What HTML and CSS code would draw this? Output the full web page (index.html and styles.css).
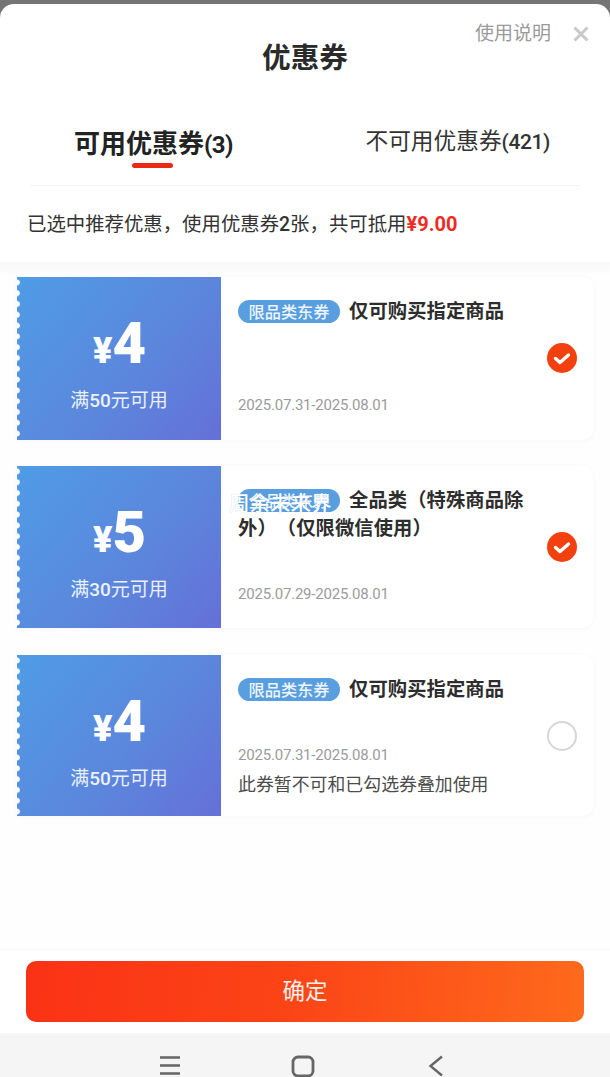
FILE: index.html
```html
<!DOCTYPE html>
<html lang="zh">
<head>
<meta charset="utf-8">
<title>优惠券</title>
<link rel="stylesheet" href="styles.css">
</head>
<body>
<div class="page">
  <div class="sheet">
    <header class="head">
      <span></span>
      <h1 class="title">优惠券</h1>
      <div class="head-tools">
        <span class="help">使用说明</span>
        <svg class="close" width="16" height="16" viewBox="0 0 16 16"><path d="M1.500 1.500l13 13M14.500 1.500l-13 13" stroke="#c9c9c9" stroke-width="3" fill="none"/></svg>
      </div>
    </header>
    <nav class="tabs">
      <div class="tab tab-on">可用优惠券<span class="num">(3)</span></div>
      <div class="tab tab-off">不可用优惠券<span class="num">(421)</span></div>
    </nav>
    <p class="summary">已选中推荐优惠，使用优惠券<span class="n">2</span>张，共可抵用<span class="sum">¥9.00</span></p>
    <section class="list">
      <article class="card">
        <div class="stub"><div class="amount"><span class="yen">¥</span><span class="val">4</span></div><div class="cond">满<span class="n">50</span>元可用</div></div>
        <div class="info">
          <div class="desc"><span class="tag">限品类东券</span>仅可购买指定商品</div>
          <div class="date">2025.07.31-2025.08.01</div>
        </div>
        <svg class="mark" width="32" height="32" viewBox="0 0 32 32"><circle cx="16" cy="16" r="15" fill="#f2410f"/><path d="M9.500 16.500l4.500 4 8.500-7.500" stroke="#fff" stroke-width="3.400" fill="none" stroke-linecap="round" stroke-linejoin="round"/></svg>
      </article>
      <article class="card">
        <div class="stub"><div class="amount"><span class="yen">¥</span><span class="val">5</span></div><div class="cond">满<span class="n">30</span>元可用</div></div>
        <div class="info">
          <div class="desc"><span class="tag">全品类东券<span class="wm">周余未来界</span></span>全品类（特殊商品除外）（仅限微信使用）</div>
          <div class="date">2025.07.29-2025.08.01</div>
        </div>
        <svg class="mark" width="32" height="32" viewBox="0 0 32 32"><circle cx="16" cy="16" r="15" fill="#f2410f"/><path d="M9.500 16.500l4.500 4 8.500-7.500" stroke="#fff" stroke-width="3.400" fill="none" stroke-linecap="round" stroke-linejoin="round"/></svg>
      </article>
      <article class="card card-last">
        <div class="stub"><div class="amount"><span class="yen">¥</span><span class="val">4</span></div><div class="cond">满<span class="n">50</span>元可用</div></div>
        <div class="info">
          <div class="desc"><span class="tag">限品类东券</span>仅可购买指定商品</div>
          <div class="date">2025.07.31-2025.08.01</div>
          <div class="note">此券暂不可和已勾选券叠加使用</div>
        </div>
        <svg class="mark" width="32" height="32" viewBox="0 0 32 32"><circle cx="16" cy="16" r="14" fill="#fff" stroke="#d6d6d6" stroke-width="2"/></svg>
      </article>
    </section>
    <footer class="foot"><button class="ok">确定</button></footer>
  </div>
  <div class="navbar">
    <svg width="22" height="20" viewBox="0 0 22 20"><path d="M1 2.500h20M1 10.500h20M1 18.500h20" stroke="#666" stroke-width="2.600" fill="none"/></svg>
    <svg width="24" height="22" viewBox="0 0 24 22"><rect x="2" y="2" width="20" height="19" rx="5" stroke="#666" stroke-width="2.800" fill="none"/></svg>
    <svg width="16" height="22" viewBox="0 0 16 22"><path d="M14 1.500L2.500 11 14 20.500" stroke="#666" stroke-width="2.400" fill="none"/></svg>
  </div>
</div>
</body>
</html>
```
FILE: styles.css
```css
* { box-sizing: border-box; }
html, body { margin: 0; padding: 0; }
body {
  font-family: "Noto Sans CJK SC", "Noto Sans", sans-serif;
  color: #2b2b2b;
  text-spacing-trim: space-all;
}
.page {
  width: 610px;
  height: 1077px;
  overflow: hidden;
  display: flex;
  flex-direction: column;
  padding-top: 4px;
  background: #757575;
}
.sheet {
  flex: 1;
  min-height: 0;
  display: flex;
  flex-direction: column;
  background: #fff;
  border-radius: 14px 14px 0 0;
}
.head {
  display: grid;
  grid-template-columns: 1fr auto 1fr;
  height: 100px;
  padding-top: 12px;
}
.title {
  margin: 18px 0 0;
  font-size: 28.600px;
  line-height: 44px;
  font-weight: 700;
  color: #2a2a2a;
}
.head-tools {
  display: flex;
  justify-content: flex-end;
  align-items: flex-start;
  gap: 22px;
  padding-right: 21px;
}
.help {
  font-size: 19px;
  line-height: 32px;
  color: #9a9a9a;
}
.close { margin-top: 10px; }
.tabs {
  display: flex;
  justify-content: space-between;
  align-items: flex-start;
  height: 82px;
  margin: 0 30px;
  padding: 18px 30px 0 44px;
  border-bottom: 1px solid #f4f4f4;
}
.tab { white-space: nowrap; position: relative; }
.num { font-family: Roboto, sans-serif; }
.tab-on {
  font-size: 26px;
  line-height: 40px;
  font-weight: 700;
  color: #222;
}
.tab-on .num { font-size: 24px; font-weight: 700; letter-spacing: -0.6px; }
.tab-on::after {
  content: "";
  position: absolute;
  left: 58px;
  top: 41px;
  width: 41px;
  height: 5px;
  border-radius: 3px;
  background: #ea2a14;
}
.tab-off {
  font-size: 22.700px;
  line-height: 36px;
  font-weight: 400;
  color: #333;
}
.tab-off .num { font-size: 21px; font-weight: 500; letter-spacing: -0.4px; }
.summary {
  margin: 0;
  height: 76px;
  padding: 22px 0 0 27px;
  font-size: 19.400px;
  line-height: 30px;
  color: #333;
  white-space: nowrap;
}
.n { font-family: Roboto, sans-serif; font-weight: 500; }
.sum {
  font-family: Roboto, sans-serif;
  font-size: 20px;
  font-weight: 700;
  color: #ef2b22;
}
.list {
  flex: 1;
  min-height: 0;
  padding: 15px 17px 0;
  background: linear-gradient(#f8f8f8, #fefefe 14px);
  display: flex;
  flex-direction: column;
  gap: 26px;
}
.card {
  display: flex;
  position: relative;
  height: 163px;
  background: #fff;
  border-radius: 0 10px 10px 0;
  box-shadow: 0 1px 6px rgba(0, 0, 0, 0.035);
}
.card:nth-child(2) { height: 162px; }
.card-last { height: 161px; margin-top: 1px; }
.stub {
  position: relative;
  flex: 0 0 204px;
  display: flex;
  flex-direction: column;
  align-items: center;
  color: #fff;
  background: linear-gradient(130deg, #4f9ce6 0%, #5c85dc 60%, #6570d8 100%);
}
.stub::before {
  content: "";
  position: absolute;
  left: 0;
  top: 0;
  bottom: 0;
  width: 4px;
  background: radial-gradient(circle at 0 50%, #fefefe 2.400px, transparent 3.400px) 0 0 / 4px 10.800px repeat-y;
}
.amount {
  display: flex;
  align-items: baseline;
  margin: 33px 0 0 1px;
  height: 66px;
  font-family: Roboto, sans-serif;
  font-weight: 900;
  line-height: 66px;
}
.yen { font-size: 36px; }
.val { font-size: 58px; }
.cond {
  margin-top: 8px;
  font-size: 19px;
  line-height: 30px;
  color: #eaf1fb;
}
.info {
  flex: 1;
  min-width: 0;
  display: flex;
  flex-direction: column;
  padding: 19px 60px 0 17px;
}
.desc {
  height: 95px;
  font-size: 19.300px;
  line-height: 28px;
  font-weight: 700;
  color: #2d2d2d;
  letter-spacing: 0.1px;
}
.tag {
  display: inline-block;
  position: relative;
  width: 102px;
  height: 23px;
  margin-right: 9px;
  border-radius: 12px;
  background: #599fe0;
  color: #eef5fc;
  font-size: 16.200px;
  font-weight: 500;
  line-height: 23px;
  text-align: center;
  vertical-align: 0;
  letter-spacing: 0;
}
.wm {
  position: absolute;
  left: -9px;
  top: 0;
  font-size: 20.500px;
  line-height: 26px;
  font-weight: 500;
  color: #fff;
  text-shadow: 0 0 1px rgba(90, 120, 170, 0.35);
  white-space: nowrap;
}
.date {
  font-family: Roboto, sans-serif;
  font-size: 15px;
  letter-spacing: -0.2px;
  line-height: 28px;
  color: #9b9b9b;
  white-space: nowrap;
}
.card-last .desc { height: 67px; }
.note {
  margin-top: -1px;
  font-size: 17.900px;
  line-height: 30px;
  color: #4c4c4c;
  white-space: nowrap;
}
.mark {
  position: absolute;
  right: 15px;
  top: 65px;
}
.foot {
  height: 84px;
  padding: 11px 26px 0;
  background: #fff;
  border-top: 1px solid #f8f8f8;
}
.ok {
  display: block;
  width: 100%;
  height: 61px;
  border: 0;
  border-radius: 10px;
  background: linear-gradient(95deg, #fb3216 0%, #fb4316 45%, #fe6a1c 100%);
  color: #f8f0ec;
  font-family: "Noto Sans CJK SC", sans-serif;
  font-size: 22.500px;
  line-height: 30px;
  padding: 0 0 5px;
}
.navbar {
  flex: 0 0 44px;
  display: grid;
  grid-template-columns: repeat(3, 133px);
  justify-content: center;
  justify-items: center;
  align-items: start;
  padding: 22px 4px 0 0;
  background: #f5f5f5;
}
```
